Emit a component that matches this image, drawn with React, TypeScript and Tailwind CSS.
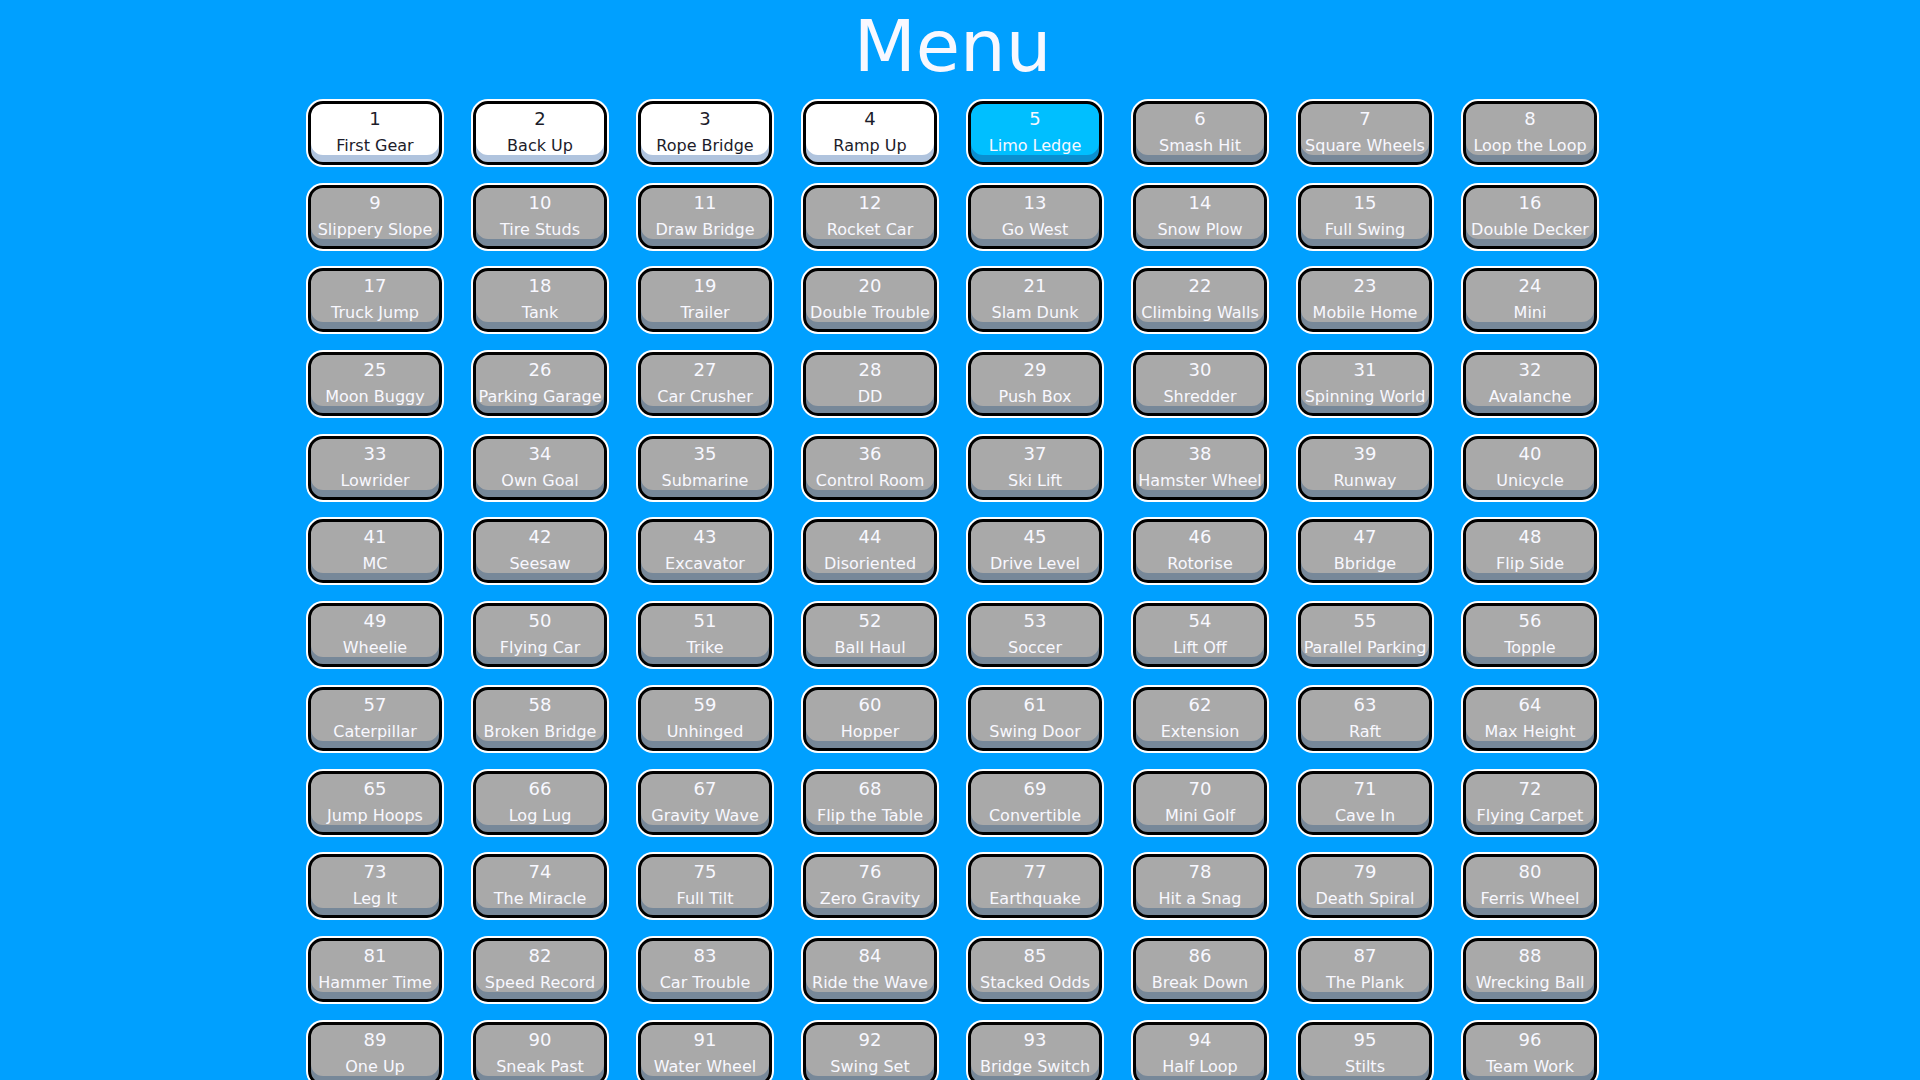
const LEVELS = [
  "First Gear", "Back Up", "Rope Bridge", "Ramp Up", "Limo Ledge", "Smash Hit", "Square Wheels", "Loop the Loop",
  "Slippery Slope", "Tire Studs", "Draw Bridge", "Rocket Car", "Go West", "Snow Plow", "Full Swing", "Double Decker",
  "Truck Jump", "Tank", "Trailer", "Double Trouble", "Slam Dunk", "Climbing Walls", "Mobile Home", "Mini",
  "Moon Buggy", "Parking Garage", "Car Crusher", "DD", "Push Box", "Shredder", "Spinning World", "Avalanche",
  "Lowrider", "Own Goal", "Submarine", "Control Room", "Ski Lift", "Hamster Wheel", "Runway", "Unicycle",
  "MC", "Seesaw", "Excavator", "Disoriented", "Drive Level", "Rotorise", "Bbridge", "Flip Side",
  "Wheelie", "Flying Car", "Trike", "Ball Haul", "Soccer", "Lift Off", "Parallel Parking", "Topple",
  "Caterpillar", "Broken Bridge", "Unhinged", "Hopper", "Swing Door", "Extension", "Raft", "Max Height",
  "Jump Hoops", "Log Lug", "Gravity Wave", "Flip the Table", "Convertible", "Mini Golf", "Cave In", "Flying Carpet",
  "Leg It", "The Miracle", "Full Tilt", "Zero Gravity", "Earthquake", "Hit a Snag", "Death Spiral", "Ferris Wheel",
  "Hammer Time", "Speed Record", "Car Trouble", "Ride the Wave", "Stacked Odds", "Break Down", "The Plank", "Wrecking Ball",
  "One Up", "Sneak Past", "Water Wheel", "Swing Set", "Bridge Switch", "Half Loop", "Stilts", "Team Work",
];

// levels 1-4 done, 5 is the current one, rest locked
function levelClass(n: number) {
  if (n <= 4) return "bg-white text-[#1c1c2a] shadow-[0_0_0_2px_#ffffff,inset_0_-7px_0_#b0c4de]";
  if (n === 5) return "bg-[#00bfff] text-[#f8f8ff] shadow-[0_0_0_2px_#ffffff,inset_0_-7px_0_#0a8fd0]";
  return "bg-[#a9a9a9] text-[#f8f8ff] shadow-[0_0_0_2px_#ffffff,inset_0_-7px_0_#778899]";
}

function LevelButton({ n, name }: { n: number; name: string }) {
  return (
    <button
      className={`w-[134px] h-[64px] border-[3px] border-black rounded-[15px] flex flex-col items-center pt-[4px] whitespace-nowrap ${levelClass(n)}`}
    >
      <span className="text-[18px] leading-[22px]">{n}</span>
      <span className="text-[16px] leading-[20px] mt-[6px]">{name}</span>
    </button>
  );
}

export default function App() {
  return (
    <div className="min-h-screen bg-[#00a0ff] pr-[15px] pb-[100px] font-['DejaVu_Sans',Verdana,sans-serif]">
      <h1 className="pt-[10px] text-center text-[72px] leading-[72px] text-[#f8f8ff]">Menu</h1>
      <div className="mx-auto mt-[19px] w-fit grid grid-cols-[repeat(8,134px)] gap-x-[31px] gap-y-[19.7px]">
        {LEVELS.map((name, i) => (
          <LevelButton key={i} n={i + 1} name={name} />
        ))}
      </div>
    </div>
  );
}
